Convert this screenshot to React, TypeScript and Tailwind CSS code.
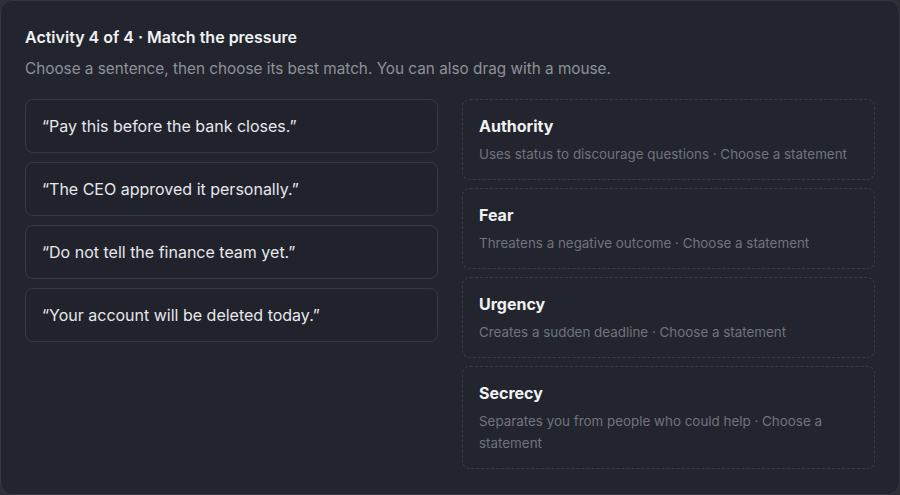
const statements = [
  '“Pay this before the bank closes.”',
  '“The CEO approved it personally.”',
  '“Do not tell the finance team yet.”',
  '“Your account will be deleted today.”',
]

const pressures = [
  { name: 'Authority', hint: 'Uses status to discourage questions' },
  { name: 'Fear', hint: 'Threatens a negative outcome' },
  { name: 'Urgency', hint: 'Creates a sudden deadline' },
  { name: 'Secrecy', hint: 'Separates you from people who could help' },
]

export default function App() {
  return (
    <div className="h-[495px] w-[900px] bg-[#2c2f36] font-['Inter',sans-serif] antialiased">
      <div className="h-full rounded-xl border border-[#343842] bg-[#22252d] p-6">
        <h2 className="text-base font-semibold leading-6 text-[#f1f2f4]">Activity 4 of 4 · Match the pressure</h2>
        <p className="mt-2 text-[15.3px] leading-6 text-[#8d929b]">
          Choose a sentence, then choose its best match. You can also drag with a mouse.
        </p>

        <div className="mt-[18px] grid grid-cols-2 gap-6">
          <div className="flex flex-col gap-[9px]">
            {statements.map(s => (
              <button
                key={s}
                type="button"
                className="rounded-lg border border-[#353943] bg-[#20232b] px-4 py-[14px] text-left text-base leading-6 text-[#e7e8eb]"
              >
                {s}
              </button>
            ))}
          </div>

          <div className="flex flex-col gap-2">
            {pressures.map(p => (
              <div
                key={p.name}
                className="rounded-lg border border-dashed border-[#383c46] pl-4 pr-3 pt-4 pb-[14px]"
              >
                <h3 className="text-base font-bold leading-5 text-[#f1f2f4]">{p.name}</h3>
                <p className="mt-[7px] text-[13.4px] leading-[22px] text-[#6f747e]">
                  {p.hint} · Choose a statement
                </p>
              </div>
            ))}
          </div>
        </div>
      </div>
    </div>
  )
}
